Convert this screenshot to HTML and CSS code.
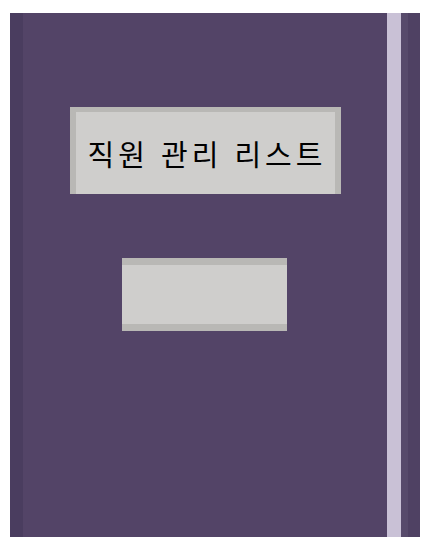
FILE: index.html
```html
<!DOCTYPE html>
<html lang="ko">
<head>
    <meta charset="UTF-8">
    <meta name="viewport" content="width=device-width, initial-scale=1.0">
    <title>직원 관리 리스트</title>
    <link rel="stylesheet" href="styles.css">
</head>
<body>

    <div class="app-frame">
        <div class="side-strip"></div>

        <div class="main-panel">
            <div class="title-box">
                <h1>직원 관리 리스트</h1>
            </div>
            <div class="empty-box"></div>
        </div>

        <div class="scroll-track"></div>
        <div class="scroll-edge"></div>
        <div class="outer-edge"></div>
    </div>

</body>
</html>
```

FILE: styles.css
```css
:root {
    --purple-main: #534467;
    --purple-dark: #4a3d5f;
    --purple-light: #c9c1d6;
    --purple-mid: #574a6b;
    --purple-edge: #4f4163;
    --gray-face: #cfcecc;
    --gray-border: #b9b8b5;
}

/* 기본 설정 */
body {
    margin: 0;
    background-color: #ffffff;
    font-family: "Noto Sans CJK KR", "Liberation Sans", sans-serif;
}

.app-frame {
    display: flex;
    height: 524px;
    margin: 13px 7px 0 10px;
}

.side-strip {
    width: 13px;
    background-color: var(--purple-dark);
}

/* 메인 영역 */
.main-panel {
    width: 364px;
    background-color: var(--purple-main);
    display: flex;
    flex-direction: column;
    align-items: center;
    padding-top: 94px;
    box-sizing: border-box;
}

.title-box {
    width: 271px;
    height: 87px;
    box-sizing: border-box;
    background-color: var(--gray-face);
    border: 6px solid var(--gray-border);
    border-top-width: 5px;
    border-bottom: none;
    display: flex;
    justify-content: center;
    align-items: center;
}

h1 {
    margin: 0 0 0 4px;
    font-size: 29px;
    font-weight: 400;
    letter-spacing: 4px;
    color: #000000;
}

.empty-box {
    width: 165px;
    height: 73px;
    margin-top: 64px;
    margin-right: 1px;
    box-sizing: border-box;
    background-color: var(--gray-face);
    border-top: 7px solid var(--gray-border);
    border-bottom: 7px solid var(--gray-border);
}

/* 오른쪽 스크롤 영역 */
.scroll-track {
    width: 14px;
    background-color: var(--purple-light);
}

.scroll-edge {
    width: 7px;
    background-color: var(--purple-mid);
}

.outer-edge {
    width: 12px;
    background-color: var(--purple-edge);
}
```
